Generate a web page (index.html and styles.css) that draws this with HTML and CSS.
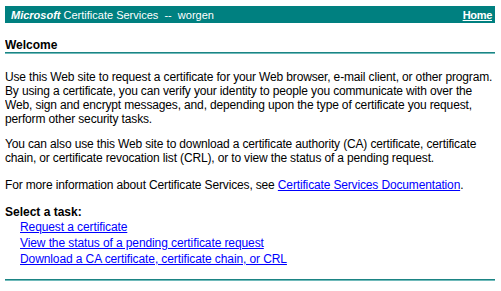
FILE: index.html
```html
<!DOCTYPE html>
<html lang="en">
<head>
    <meta charset="UTF-8">
    <title>Microsoft Certificate Services</title>
    <link rel="stylesheet" href="styles.css">
</head>
<body>
    <div class="header">
        <span class="title"><i class="brand">Microsoft</i> Certificate Services &nbsp;--&nbsp; worgen</span>
        <a href="#" class="home">Home</a>
    </div>

    <h2 class="welcome">Welcome</h2>

    <p class="intro">Use this Web site to request a certificate for your Web browser, e-mail client, or other program.<br>
    By using a certificate, you can verify your identity to people you communicate with over the<br>
    Web, sign and encrypt messages, and, depending upon the type of certificate you request,<br>
    perform other security tasks.</p>

    <p class="download">You can also use this Web site to download a certificate authority (CA) certificate, certificate<br>
    chain, or certificate revocation list (CRL), or to view the status of a pending request.</p>

    <p class="more">For more information about Certificate Services, see <a href="#">Certificate Services Documentation</a>.</p>

    <div class="tasks">
        <b>Select a task:</b>
        <ul>
            <li><a href="#">Request a certificate</a></li>
            <li><a href="#">View the status of a pending certificate request</a></li>
            <li><a href="#">Download a CA certificate, certificate chain, or CRL</a></li>
        </ul>
    </div>

    <div class="rule"></div>
</body>
</html>
```

FILE: styles.css
```css
body {
    font-family: "Liberation Sans", Arial, sans-serif;
    font-size: 12px;
    line-height: 14px;
    color: #000;
    background-color: #fff;
    margin: 6px 6px 0 5px;
}
.header {
    background-color: #008080;
    color: #fff;
    height: 17px;
    display: flex;
    align-items: center;
    justify-content: space-between;
    padding: 0 3px 0 6px;
    font-size: 11px;
}
.brand {
    font-weight: bold;
}
.home {
    color: #fff;
    font-weight: bold;
    font-size: 11px;
    letter-spacing: -0.3px;
}
.welcome {
    font-size: 12px;
    line-height: 13px;
    font-weight: bold;
    margin: 16px 0 0 0;
    border-bottom: 1px solid #1b8484;
    box-shadow: 0 1px 0 #70baba;
}
p {
    margin: 0;
    letter-spacing: -0.15px;
}
.intro {
    margin-top: 17px;
}
.download {
    margin-top: 11px;
}
.more {
    margin-top: 13px;
}
a {
    color: #0000ff;
}
.tasks {
    margin-top: 13px;
}
.tasks ul {
    list-style: none;
    margin: 0;
    padding: 0 0 0 15px;
}
.tasks li {
    line-height: 16px;
    letter-spacing: -0.1px;
}
.rule {
    margin-top: 12px;
    border-top: 1px solid #1b8484;
    border-bottom: 1px solid #70baba;
}
```
